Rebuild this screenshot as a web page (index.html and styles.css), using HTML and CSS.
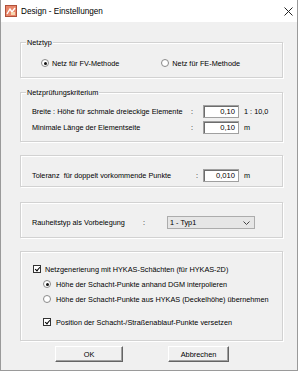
FILE: index.html
```
<!DOCTYPE html>
<html lang="de">
<head>
    <meta charset="UTF-8">
    <title>Design - Einstellungen</title>
    <link rel="stylesheet" href="styles.css">
</head>
<body>
    <div class="window">
        <div class="titlebar">
            <svg class="app-icon" width="12" height="12" viewBox="0 0 12 12">
                <rect x="0.5" y="0.5" width="11" height="11" fill="#e8866a" stroke="#b0503a"/>
                <path d="M2 9 L5 4 L7 7 L10 3" fill="none" stroke="#fff" stroke-width="1.4"/>
                <rect x="6" y="7" width="4" height="3" fill="#f6d6b0"/>
            </svg>
            <span class="title">Design - Einstellungen</span>
            <svg class="close" width="9" height="9" viewBox="0 0 9 9">
                <path d="M0.5 0.5 L8.5 8.5 M8.5 0.5 L0.5 8.5" stroke="#222" stroke-width="1"/>
            </svg>
        </div>

        <div class="content">
            <div class="group group-netztyp">
                <span class="group-title">Netztyp</span>
                <div class="radio-row">
                    <label class="option"><span class="radio checked"></span>Netz für FV-Methode</label>
                    <label class="option option-fe"><span class="radio"></span>Netz für FE-Methode</label>
                </div>
            </div>

            <div class="group group-pruefung">
                <span class="group-title">Netzprüfungskriterium</span>
                <div class="field-row">
                    <span class="label label-wide">Breite : Höhe für schmale dreieckige Elemente</span>
                    <span class="colon">:</span>
                    <span class="input">0,10</span>
                    <span class="unit">1 : 10,0</span>
                </div>
                <div class="field-row">
                    <span class="label label-wide">Minimale Länge der Elementseite</span>
                    <span class="colon">:</span>
                    <span class="input">0,10</span>
                    <span class="unit">m</span>
                </div>
            </div>

            <div class="group group-toleranz">
                <div class="field-row">
                    <span class="label label-tol">Toleranz&nbsp; für doppelt vorkommende Punkte</span>
                    <span class="colon colon-tol">:</span>
                    <span class="input">0,010</span>
                    <span class="unit">m</span>
                </div>
            </div>

            <div class="group group-rauheit">
                <div class="field-row">
                    <span class="label label-rau">Rauheitstyp als Vorbelegung</span>
                    <span class="colon colon-rau">:</span>
                    <span class="select">
                        <span>1 - Typ1</span>
                        <svg width="7" height="4" viewBox="0 0 7 4"><path d="M0.5 0.5 L3.5 3.5 L6.5 0.5" fill="none" stroke="#444"/></svg>
                    </span>
                </div>
            </div>

            <div class="group group-hykas">
                <label class="option check-main"><span class="checkbox checked"></span>Netzgenerierung mit HYKAS-Schächten (für HYKAS-2D)</label>
                <label class="option sub sub-first"><span class="radio checked"></span>Höhe der Schacht-Punkte anhand DGM interpolieren</label>
                <label class="option sub"><span class="radio"></span>Höhe der Schacht-Punkte aus HYKAS (Deckelhöhe) übernehmen</label>
                <label class="option sub sub-check"><span class="checkbox checked"></span>Position der Schacht-/Straßenablauf-Punkte versetzen</label>
            </div>

            <div class="buttons">
                <button class="btn btn-ok">OK</button>
                <button class="btn btn-cancel">Abbrechen</button>
            </div>
        </div>
    </div>
</body>
</html>
```

FILE: styles.css
```
* {
    margin: 0;
    padding: 0;
    box-sizing: border-box;
}

body {
    background: #ffffff;
    font-family: "Liberation Sans", Arial, sans-serif;
    font-size: 7.3px;
    color: #000;
}

.window {
    width: 298px;
    height: 371px;
    border: 1px solid #9a9a9a;
    border-top: none;
    background: #f0f0f0;
}

.titlebar {
    height: 22px;
    background: #fff;
    display: flex;
    align-items: center;
    padding-left: 4px;
    padding-right: 4px;
}

.app-icon {
    margin-right: 4px;
}

.title {
    font-size: 8.2px;
    flex: 1;
}

.content {
    padding: 20px 14px 0 19px;
}

.group {
    position: relative;
    border: 1px solid #d2d2d2;
    box-shadow: inset 1px 1px 0 #fff, 1px 1px 0 #fff;
    margin-bottom: 13px;
}

.group-title {
    position: absolute;
    top: -5px;
    left: 5px;
    padding: 0 1px;
    background: #f0f0f0;
    line-height: 9px;
}

.group-netztyp {
    height: 36px;
    padding-top: 14px;
    margin-bottom: 14px;
}

.group-pruefung {
    height: 50px;
    padding-top: 12px;
}

.group-toleranz {
    height: 32px;
    padding-top: 13px;
    margin-bottom: 15px;
}

.group-rauheit {
    height: 36px;
    padding-top: 13px;
}

.group-hykas {
    height: 90px;
    padding-top: 11px;
    margin-bottom: 5px;
}

.radio-row {
    display: flex;
    height: 12px;
    padding-left: 20px;
}

.option {
    display: flex;
    align-items: center;
    height: 12px;
    white-space: nowrap;
}

.option-fe {
    margin-left: 42px;
}

.radio {
    width: 8px;
    height: 8px;
    border-radius: 50%;
    border: 1px solid #8a8a8a;
    background: #fff;
    margin-right: 3px;
    position: relative;
}

.radio.checked::after {
    content: "";
    position: absolute;
    left: 1.5px;
    top: 1.5px;
    width: 3px;
    height: 3px;
    border-radius: 50%;
    background: #111;
}

.checkbox {
    width: 8px;
    height: 8px;
    border: 1px solid #333;
    background: #fff;
    margin-right: 4px;
    position: relative;
}

.checkbox.checked::after {
    content: "";
    position: absolute;
    left: 1.5px;
    top: 0;
    width: 2px;
    height: 4px;
    border-right: 1.5px solid #000;
    border-bottom: 1.5px solid #000;
    transform: rotate(40deg);
}

.check-main {
    padding-left: 12px;
}

.sub {
    padding-left: 22px;
    margin-top: 3px;
}

.sub .radio {
    margin-right: 5px;
}

.sub-check {
    margin-top: 11px;
}

.sub-check .checkbox {
    margin-right: 5px;
}

.field-row {
    display: flex;
    align-items: center;
    height: 13px;
    padding-left: 11px;
    margin-bottom: 3px;
    white-space: nowrap;
}

.label-wide {
    width: 159px;
}

.label-tol {
    width: 164px;
}

.label-rau {
    width: 111px;
}

.colon {
    width: 12px;
}

.colon-tol {
    width: 7px;
}

.colon-rau {
    width: 24px;
}

.input {
    width: 36px;
    height: 13px;
    background: #fff;
    border: 1px solid #a0a0a0;
    box-shadow: inset 1px 1px 0 #6d6d6d;
    text-align: right;
    padding-right: 3px;
    line-height: 11px;
    font-size: 7.6px;
}

.unit {
    margin-left: 5px;
}

.select {
    width: 88px;
    height: 13px;
    background: #e6e6e6;
    border: 1px solid #acacac;
    display: flex;
    align-items: center;
    justify-content: space-between;
    padding: 0 4px 0 2px;
}

.buttons {
    display: flex;
    height: 16px;
}

.btn {
    height: 16px;
    font-family: "Liberation Sans", Arial, sans-serif;
    font-size: 7.4px;
    background: #f0f0f0;
    border: 1px solid;
    border-color: #fff #646464 #646464 #fff;
    box-shadow: inset -1px -1px 0 #a0a0a0;
    color: #000;
}

.btn-ok {
    width: 68px;
    margin-left: 35px;
}

.btn-cancel {
    width: 61px;
    margin-left: 45px;
}
```
